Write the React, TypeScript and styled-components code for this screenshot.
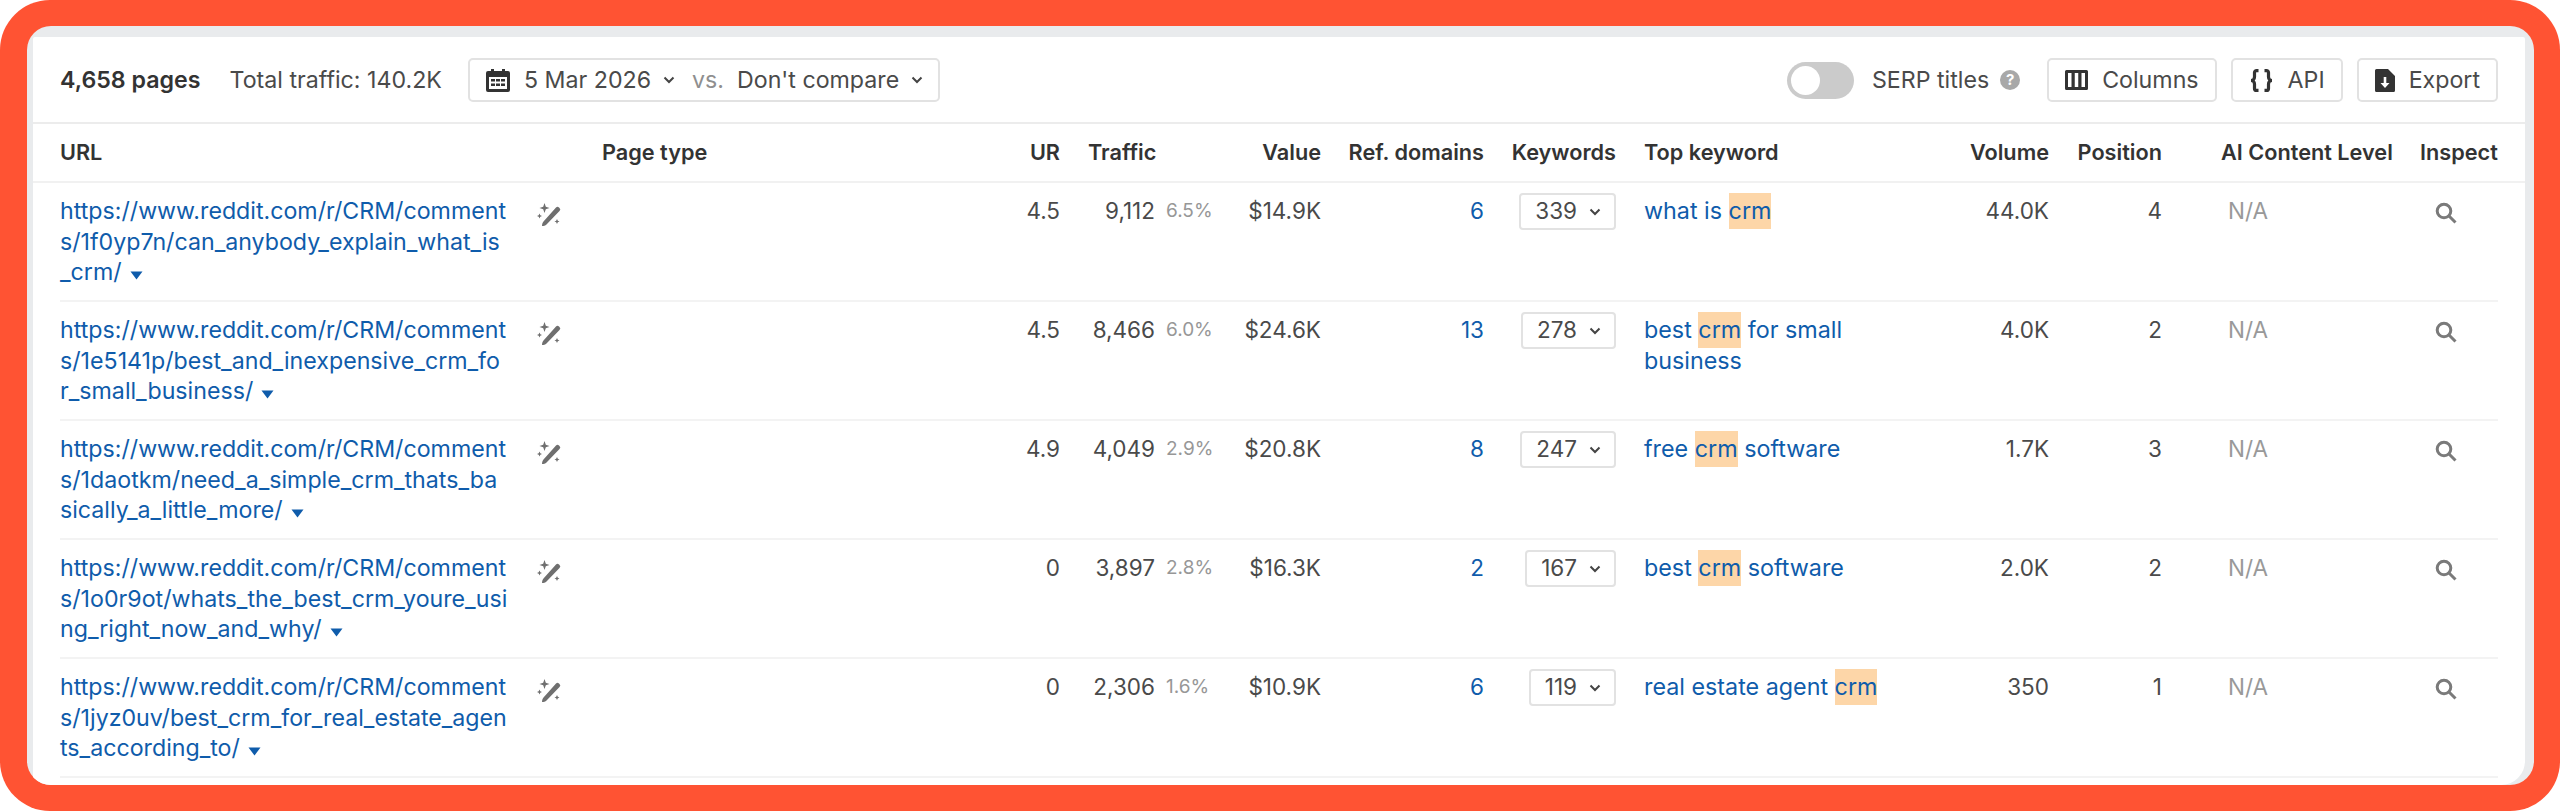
import React from 'react'
import styled, { createGlobalStyle } from 'styled-components'

const GlobalStyle = createGlobalStyle`
  html, body {
    margin: 0;
    padding: 0;
    background: #fff;
  }
  * {
    box-sizing: border-box;
  }
`

const rows = [
  {
    url: 'https://www.reddit.com/r/CRM/comments/1f0yp7n/can_anybody_explain_what_is_crm/',
    ur: '4.5',
    traffic: '9,112',
    share: '6.5%',
    value: '$14.9K',
    domains: '6',
    keywords: '339',
    top: ['what is ', 'crm', ''],
    volume: '44.0K',
    position: '4'
  },
  {
    url: 'https://www.reddit.com/r/CRM/comments/1e5141p/best_and_inexpensive_crm_for_small_business/',
    ur: '4.5',
    traffic: '8,466',
    share: '6.0%',
    value: '$24.6K',
    domains: '13',
    keywords: '278',
    top: ['best ', 'crm', ' for small', 'business'],
    volume: '4.0K',
    position: '2'
  },
  {
    url: 'https://www.reddit.com/r/CRM/comments/1daotkm/need_a_simple_crm_thats_basically_a_little_more/',
    ur: '4.9',
    traffic: '4,049',
    share: '2.9%',
    value: '$20.8K',
    domains: '8',
    keywords: '247',
    top: ['free ', 'crm', ' software'],
    volume: '1.7K',
    position: '3'
  },
  {
    url: 'https://www.reddit.com/r/CRM/comments/1o0r9ot/whats_the_best_crm_youre_using_right_now_and_why/',
    ur: '0',
    traffic: '3,897',
    share: '2.8%',
    value: '$16.3K',
    domains: '2',
    keywords: '167',
    top: ['best ', 'crm', ' software'],
    volume: '2.0K',
    position: '2'
  },
  {
    url: 'https://www.reddit.com/r/CRM/comments/1jyz0uv/best_crm_for_real_estate_agents_according_to/',
    ur: '0',
    traffic: '2,306',
    share: '1.6%',
    value: '$10.9K',
    domains: '6',
    keywords: '119',
    top: ['real estate agent ', 'crm', ''],
    volume: '350',
    position: '1'
  }
]

const Chevron = () => (
  <svg width="12" height="8" viewBox="0 0 12 8" fill="none">
    <path d="M1.500 1.500L6 6l4.500-4.500" stroke="#444" strokeWidth="2" />
  </svg>
)

const CalendarIcon = () => (
  <svg width="24" height="23" viewBox="0 0 24 23">
    <path
      fillRule="evenodd"
      fill="#333"
      d="M5 0h3v2h8V0h3v2h3a2 2 0 0 1 2 2v17a2 2 0 0 1-2 2H2a2 2 0 0 1-2-2V4a2 2 0 0 1 2-2h3zM3 8v12h18V8zM5 10h4v2.500H5zM10 10h4v2.500h-4zM15 10h4v2.500h-4zM5 14.500h4V17H5zM10 14.500h4V17h-4zM15 14.500h4V17h-4z"
    />
  </svg>
)

const ColumnsIcon = () => (
  <svg width="23" height="20" viewBox="0 0 23 20">
    <path
      fillRule="evenodd"
      fill="#333"
      d="M1.500 0h20A1.500 1.500 0 0 1 23 1.500v17a1.500 1.500 0 0 1-1.500 1.500h-20A1.500 1.500 0 0 1 0 18.500v-17A1.500 1.500 0 0 1 1.500 0zM3 3v14h3.500V3zM9.750 3v14h3.500V3zM16.500 3v14H20V3z"
    />
  </svg>
)

const BracesIcon = () => (
  <svg width="25" height="23" viewBox="0 0 25 23" fill="none" stroke="#333" strokeWidth="3.200">
    <path d="M9.500 1.600H7.500a2 2 0 0 0-2 2V8c0 2-1.500 3.500-3.500 3.500 2 0 3.500 1.500 3.500 3.500v4.400a2 2 0 0 0 2 2h2" />
    <path d="M15.500 1.600h2a2 2 0 0 1 2 2V8c0 2 1.500 3.500 3.500 3.500-2 0-3.500 1.500-3.500 3.500v4.400a2 2 0 0 1-2 2h-2" />
  </svg>
)

const ExportIcon = () => (
  <svg width="20" height="23" viewBox="0 0 20 23">
    <path
      fillRule="evenodd"
      fill="#333"
      d="M1.500 0H13l7 7v14.500a1.500 1.500 0 0 1-1.500 1.500h-17A1.500 1.500 0 0 1 0 21.500v-20A1.500 1.500 0 0 1 1.500 0zM8.700 8v6H5.500l4.500 5 4.500-5h-3.200V8z"
    />
  </svg>
)

const WandIcon = () => (
  <svg width="25" height="25" viewBox="0 0 25 25" fill="#6f6f6f">
    <path d="M19 5.500a2 2 0 0 1 3 0l.5.500a2 2 0 0 1 0 3L9.500 22.500c-1 1-3 1.500-4.500 1.500 0-1.500.5-3.500 1.500-4.500z" />
    <path d="M7.500 1l1.300 3.700L12.500 6 8.800 7.300 7.500 11 6.200 7.300 2.500 6l3.700-1.300z" />
    <path d="M2.500 11.500l.8 1.700 1.700.8-1.700.8-.8 1.700-.8-1.700L0 14l1.700-.8z" />
    <path d="M20 17l.8 1.700 1.700.8-1.700.8-.8 1.700-.8-1.700-1.700-.8 1.700-.8z" />
  </svg>
)

const SearchIcon = () => (
  <svg width="22" height="22" viewBox="0 0 22 22" fill="none" stroke="#7a7a7a" strokeWidth="3">
    <circle cx="9" cy="9" r="6.800" />
    <path d="M14 14l6.500 6.500" />
  </svg>
)

const Caret = () => (
  <CaretMark width="13" height="9" viewBox="0 0 13 9">
    <path d="M0.500 0.500h12L6.500 8.500z" fill="#0f5cab" />
  </CaretMark>
)

export default function App() {
  return (
    <Frame>
      <GlobalStyle />
      <Card>
        <Sheet>
          <Toolbar>
            <Count>4,658 pages</Count>
            <Total>Total traffic: 140.2K</Total>
            <DateBox>
              <CalendarIcon />
              <DateLabel>5 Mar 2026</DateLabel>
              <Chevron />
              <Versus>vs.</Versus>
              <DateLabel>Don't compare</DateLabel>
              <Chevron />
            </DateBox>
            <ToolbarRight>
              <Toggle>
                <Knob />
              </Toggle>
              <SerpLabel>SERP titles</SerpLabel>
              <Help>?</Help>
              <ToolButton $first>
                <ColumnsIcon />
                Columns
              </ToolButton>
              <ToolButton>
                <BracesIcon />
                API
              </ToolButton>
              <ToolButton>
                <ExportIcon />
                Export
              </ToolButton>
            </ToolbarRight>
          </Toolbar>
          <HeadRow>
            <div>URL</div>
            <div>Page type</div>
            <Right>UR</Right>
            <TrafficHead>Traffic</TrafficHead>
            <Right>Value</Right>
            <Right>Ref. domains</Right>
            <Right>Keywords</Right>
            <TopHead>Top keyword</TopHead>
            <Right>Volume</Right>
            <Right>Position</Right>
            <AiHead>AI Content Level</AiHead>
            <div>Inspect</div>
          </HeadRow>
          <Body>
            {rows.map(row => (
              <Row key={row.url}>
                <UrlCell>
                  <UrlLink>
                    {row.url}
                    <Caret />
                  </UrlLink>
                  <WandSlot>
                    <WandIcon />
                  </WandSlot>
                </UrlCell>
                <div />
                <Right>{row.ur}</Right>
                <TrafficCell>
                  <TrafficValue>{row.traffic}</TrafficValue>
                  <Share>{row.share}</Share>
                </TrafficCell>
                <Right>{row.value}</Right>
                <DomainLink>{row.domains}</DomainLink>
                <KeywordCell>
                  <KeywordSelect>
                    {row.keywords}
                    <Chevron />
                  </KeywordSelect>
                </KeywordCell>
                <TopCell>
                  <div>
                    {row.top[0]}
                    <Mark>{row.top[1]}</Mark>
                    {row.top[2]}
                  </div>
                  {row.top[3] && <div>{row.top[3]}</div>}
                </TopCell>
                <Right>{row.volume}</Right>
                <Right>{row.position}</Right>
                <NotAvailable>N/A</NotAvailable>
                <InspectCell>
                  <SearchIcon />
                </InspectCell>
              </Row>
            ))}
          </Body>
        </Sheet>
      </Card>
    </Frame>
  )
}

const tracks = '542px 418px 40px 165px 96px 163px 132px 349px 84px 113px 258px 78px'

const Frame = styled.div`
  width: 2560px;
  height: 811px;
  padding: 26px 26px 26px 27px;
  background: #ff5333;
  border-radius: 50px;
  font-family: Inter, 'Liberation Sans', sans-serif;
  font-size: 22.5px;
  line-height: 30.5px;
  color: #4a4a4a;
`
const Card = styled.div`
  height: 100%;
  padding: 11px 9px 0 6px;
  background: #e9ebed;
  border-radius: 24px;
  overflow: hidden;
`
const Sheet = styled.div`
  height: 100%;
  background: #fff;
  border-radius: 2px 2px 24px 0;
`
const Toolbar = styled.div`
  display: flex;
  align-items: center;
  height: 87px;
  padding: 1px 27px 0 27px;
  border-bottom: 2px solid #ececec;
  font-size: 23.2px;
`
const Count = styled.div`
  font-weight: 600;
  color: #333;
`
const Total = styled.div`
  margin-left: 29px;
`
const DateBox = styled.div`
  display: flex;
  align-items: center;
  height: 44px;
  margin-left: 26px;
  padding: 0 15px 0 16px;
  border: 2px solid #e2e2e2;
  border-radius: 5px;
`
const DateLabel = styled.span`
  margin: 0 12px 0 14px;
`
const Versus = styled.span`
  margin-left: 17px;
  margin-right: -1px;
  color: #8f8f8f;
`
const ToolbarRight = styled.div`
  display: flex;
  align-items: center;
  margin-left: auto;
`
const Toggle = styled.div`
  display: flex;
  align-items: center;
  width: 67px;
  height: 37px;
  padding-left: 4px;
  background: #cbcbcb;
  border-radius: 19px;
`
const Knob = styled.div`
  width: 29px;
  height: 29px;
  background: #fff;
  border-radius: 50%;
`
const SerpLabel = styled.span`
  margin-left: 18px;
`
const Help = styled.span`
  display: flex;
  align-items: center;
  justify-content: center;
  width: 20px;
  height: 20px;
  margin-left: 11px;
  background: #a8a8a8;
  border-radius: 50%;
  font-size: 15px;
  font-weight: 700;
  line-height: 20px;
  color: #fff;
`
const ToolButton = styled.div<{ $first?: boolean }>`
  display: flex;
  align-items: center;
  gap: 14px;
  height: 44px;
  margin-left: ${props => (props.$first ? '27px' : '14px')};
  padding: 0 16px;
  border: 2px solid #e2e2e2;
  border-radius: 5px;
`
const HeadRow = styled.div`
  display: grid;
  grid-template-columns: ${tracks};
  align-items: center;
  height: 59px;
  padding: 0 27px 0 27px;
  border-bottom: 2px solid #f1f1f1;
  font-size: 21.7px;
  font-weight: 600;
  color: #333;
  white-space: nowrap;
`
const Right = styled.div`
  text-align: right;
`
const TrafficHead = styled.div`
  padding-left: 28px;
`
const TopHead = styled.div`
  padding-left: 28px;
`
const AiHead = styled.div`
  padding-left: 59px;
`
const Body = styled.div`
  padding: 0 27px 0 27px;
`
const Row = styled.div`
  display: grid;
  grid-template-columns: ${tracks};
  height: 119px;
  padding-top: 13px;
  border-bottom: 2px solid #f3f3f3;
`
const UrlCell = styled.div`
  display: flex;
  align-items: flex-start;
`
const UrlLink = styled.div`
  width: 477px;
  padding-right: 29px;
  font-size: 23.2px;
  color: #0f5cab;
  word-break: break-all;
`
const CaretMark = styled.svg`
  margin-left: 8px;
`
const WandSlot = styled.div`
  padding-top: 6px;
`
const TrafficCell = styled.div`
  display: flex;
  padding-left: 28px;
`
const TrafficValue = styled.div`
  width: 67px;
  text-align: right;
`
const Share = styled.div`
  margin-left: 11px;
  font-size: 19px;
  color: #979797;
`
const DomainLink = styled.div`
  text-align: right;
  color: #0f5cab;
`
const KeywordCell = styled.div`
  display: flex;
  justify-content: flex-end;
  margin-top: -3px;
`
const KeywordSelect = styled.div`
  display: flex;
  align-items: center;
  gap: 12px;
  height: 37px;
  padding: 0 13px 0 14px;
  border: 2px solid #e2e2e2;
  border-radius: 4px;
`
const TopCell = styled.div`
  padding: 0 20px 0 28px;
  font-size: 23.3px;
  color: #0f5cab;
`
const Mark = styled.span`
  padding: 3px 0 4px;
  background: #fdd6a8;
`
const NotAvailable = styled.div`
  padding-left: 66px;
  color: #999;
`
const InspectCell = styled.div`
  padding: 5px 0 0 15px;
`
